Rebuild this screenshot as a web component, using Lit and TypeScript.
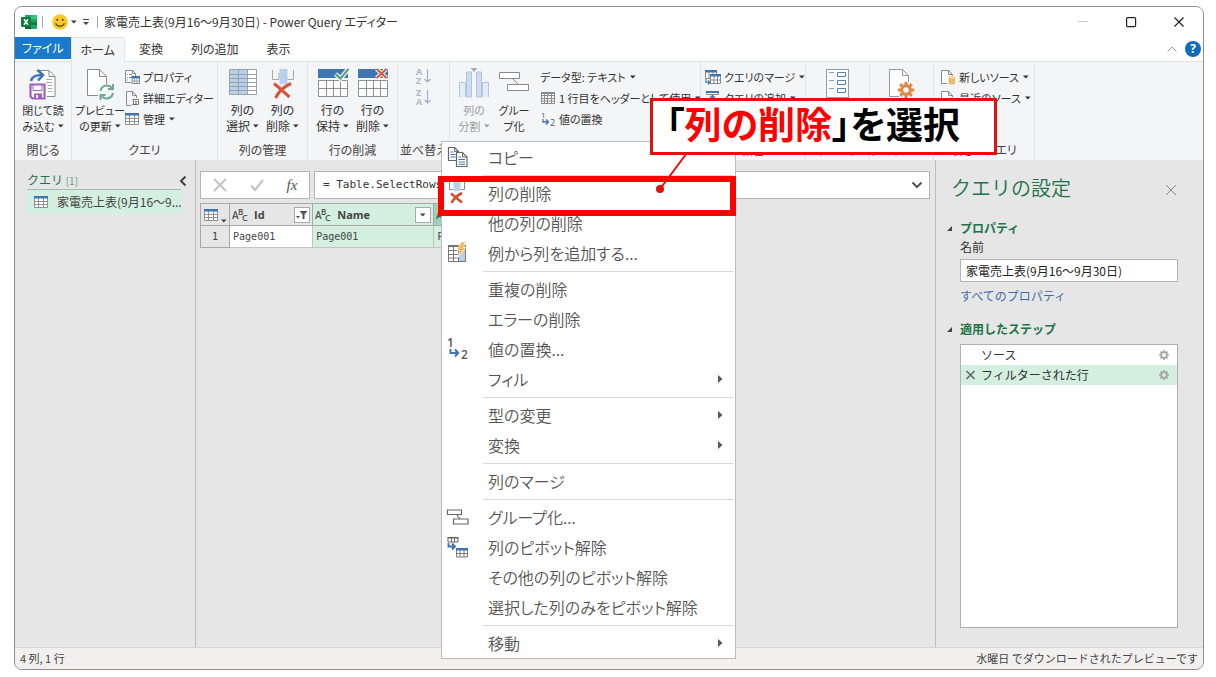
import { LitElement, html, svg, css, nothing } from "lit";
import { customElement } from "lit/decorators.js";
import { classMap } from "lit/directives/class-map.js";

const ic = (w: number, h: number, body: unknown) =>
  html`<svg class="ic" width=${w} height=${h} viewBox="0 0 ${w} ${h}" fill="none" aria-hidden="true">${body}</svg>`;

const caret = html`<svg class="caret" width="6" height="4" viewBox="0 0 6 4" aria-hidden="true"><path d="M0 .5h5.6L2.8 3.4z" fill="currentColor" /></svg>`;

const gearPath = (cx: number, cy: number, r: number, color: string, w: number) => svg`
  <circle cx=${cx} cy=${cy} r=${r} stroke=${color} stroke-width=${w} />
  ${[0, 45, 90, 135, 180, 225, 270, 315].map(
    (a) => svg`<path d="M${cx} ${cy - r - w * 0.3}v${-w * 0.9}" stroke=${color} stroke-width=${w * 0.95} transform="rotate(${a} ${cx} ${cy})" />`
  )}`;

const excel = ic(16, 16, svg`
  <path d="M4 1h11a1 1 0 0 1 1 1v12a1 1 0 0 1-1 1H4z" fill="#21a366" />
  <path d="M10 1h5a1 1 0 0 1 1 1v3h-6z" fill="#33c481" /><path d="M4 8h6v7H5a1 1 0 0 1-1-1z" fill="#185c37" />
  <path d="M10 8h6v3h-6z" fill="#107c41" />
  <rect y="3" width="10" height="10" rx="1" fill="#107c41" />
  <path d="M3 5.3l4 5.4M7 5.3l-4 5.4" stroke="#fff" stroke-width="1.5" />`);

const smiley = ic(16, 16, svg`
  <circle cx="8" cy="8" r="7.8" fill="#fbc926" />
  <circle cx="5.3" cy="5.8" r="1.1" fill="#5a4a2a" /><circle cx="10.7" cy="5.8" r="1.1" fill="#5a4a2a" />
  <path d="M3.6 9.2c1.6 4 7.2 4 8.8 0" stroke="#5a4a2a" stroke-width="1.2" />`);

const closeLoad = ic(28, 32, svg`
  <path d="M7.500 2.500h12.500l6 6v20h-8" fill="#fff" stroke="#8a8a8a" /><path d="M20 2.500v6h6" stroke="#8a8a8a" />
  <path d="M17 11.500h6M17 14.500h6M19 17.500h4M19 20.500h4M19 23.500h4" stroke="#a8a8a8" />
  <path d="M2 13c1-4.500 4-6 11-6" stroke="#3f74b5" stroke-width="2.600" /><path d="M8.500 2 14 7l-5 5.500" stroke="#3f74b5" stroke-width="2.600" />
  <path d="M1.500 16.500h14v14h-12l-2-2z" fill="#fff" stroke="#a05fc0" stroke-width="2.200" />
  <path d="M4 17h9v5.500H4z" fill="#fff" stroke="#a05fc0" /><path d="M5 25.500h8V31H5z" fill="#a05fc0" /><path d="M7 27h2v3H7z" fill="#fff" />`);

const refresh = ic(28, 32, svg`
  <path d="M1.500 1.500h12l7 7V20l-8 7.500h-11z" fill="#fff" />
  <path d="M12 27.500H1.500v-26h12l7 7v7.500M13.500 1.500v7h7" stroke="#8a8a8a" />
  <path d="M14.500 23a6.500 6.500 0 0 1 11.500-3M27 25a6.500 6.500 0 0 1-11.500 3" stroke="#6fa892" stroke-width="2" />
  <path d="M27 16v5h-5M14.500 32v-5h5" stroke="#6fa892" stroke-width="2" />`);

const props = ic(16, 16, svg`
  <path d="M7 13.500H1.500v-12h7l3 3V7" fill="#fff" stroke="#8a8a8a" /><path d="M8.500 1.500v3h3M3 5.500h1M5 5.500h3M3 8.500h1M5 8.500h2M3 11h1" stroke="#8a8a8a" />
  <rect x="8" y="7.500" width="7.500" height="7" fill="#fff" stroke="#8a8a8a" /><path d="M7.500 7h8.500v2.500H7.500z" fill="#3f74b5" /><path d="M10.500 9.500v5M13 9.500v5M8 12h7.500" stroke="#8a8a8a" stroke-width=".8" />`);

const adv = ic(16, 16, svg`
  <path d="M7 15.500H2.500v-14h6l4 4V8M8.500 1.500v4h4" stroke="#8a8a8a" />
  <path d="M8.500 9.500h6M9.500 9.500v5h5v-5M8 14.500h5M11 11.500h2M11 13h2" stroke="#777" />`);

const tableIcon = ic(16, 16, svg`
  <path d="M1.500 2.500h13v11h-13zM5.500 4v9.500M10.500 4v9.500M2 7.500h12.500M2 10.500h12.500" fill="#fff" stroke="#909090" /><path d="M1 2h14v2.500H1z" fill="#3f74b5" />`);

const chooseCols = ic(28, 28, svg`
  <rect x=".5" y="1.500" width="27" height="25" fill="#fff" /><path d="M.500 1.500h18v25H.500z" fill="#b9d0ea" />
  <path d="M.500 1.500h27v25H.500zM9.500 2v24M18.500 2v24M1 6.500h26M1 10.500h26M1 14.500h26M1 18.500h26M1 22.500h26" stroke="#98a2ad" />`);

const removeCols = ic(24, 32, svg`
  <path d="M1.500 2v9.500H8M22.500 2v9.500H16M8 11V5" stroke="#a6a6a6" /><path d="M8.500 1h8v15h-8z" fill="#b9d0ea" />
  <path d="M3 15.500c5 4 10 9 15.500 13.500M20 15.500C14 18 8 23 4.500 30" stroke="#d9553a" stroke-width="3" />`);

const rowGrid = svg`<path d="M.500 12.500h29v16H.500zM8.500 12.500v16M15.500 12.500v16M22.500 12.500v16M.500 20.500h29" fill="#fff" stroke="#8f8f8f" /><path d="M0 1h30v9H0z" fill="#3f77b4" />`;
const keepRows = ic(30, 30, svg`${rowGrid}<path d="M17.500 6l5 4.500 8-9.500" stroke="#fff" stroke-width="4.500" /><path d="M17.500 6l5 4.500 8-9.500" stroke="#5fa489" stroke-width="2.400" />`);
const removeRows = ic(30, 30, svg`${rowGrid}<path d="M18.500 1l10 9M28.500 1l-10 9" stroke="#fff" stroke-width="4" /><path d="M18.500 1l10 9M28.500 1l-10 9" stroke="#d9553a" stroke-width="2.200" />`);

const sortIcon = (a: string, b: string) => ic(16, 16, svg`
  <text x="0" y="7" font-size="9" font-weight="700" fill="#a9b6d3" font-family="Open Sans">${a}</text>
  <text x="0" y="15.500" font-size="9" font-weight="700" fill="#b5b9c2" font-family="Open Sans">${b}</text>
  <path d="M11.500 1v13M8.500 11l3 3 3-3" stroke="#9eaed0" stroke-width="1.200" />`);

const splitCols = ic(30, 30, svg`
  <path d="M.500 29V14.500h6V29M23.500 29V14.500h6V29" fill="#e3ecf9" stroke="#b8c7e0" /><path d="M7.500 4h5v25h-5zM17.500 4h5v25h-5z" fill="#cfdcf0" stroke="#b3c3de" /><path d="M11.500 0h7L15 4z" fill="#a8a8b0" />`);

const groupIcon = ic(30, 28, svg`<path d="M.500 4.500h20v6h-20zM8.500 16.500h21v6h-21z" fill="#fff" stroke="#8a8a8a" /><path d="M14 11l5 5" stroke="#8a8a8a" />`);

const headerIcon = ic(16, 16, svg`<path d="M1.500 2.500h13v11h-13zM4.500 3v10M7.500 3v10M11.500 3v10M2 5.500h12M2 8.500h12M2 11h12" fill="#fff" stroke="#8a8a8a" /><path d="M1 2h14v2H1z" fill="#8a8a8a" />`);

const replaceIcon = ic(16, 16, svg`
  <text x="1" y="7" font-size="8" fill="#555" font-family="Open Sans">1</text><text x="10" y="15" font-size="9" fill="#555" font-family="Open Sans">2</text>
  <path d="M3 8v3h5M6 8.500 8.500 11 6 13.500" stroke="#3f74b5" stroke-width="1.300" />`);

const mergeIcon = ic(16, 16, svg`
  <path d="M.500 1.500h11v8H.500zM4 2v7M8 2v7" fill="#fff" stroke="#8a8a8a" /><path d="M0 1h12v2.500H0z" fill="#3f74b5" />
  <path d="M5.500 5.500h10v9h-10zM9 7v7M12.500 7v7M6 11h9" fill="#fff" stroke="#8a8a8a" /><path d="M5 5h11v2.500H5z" fill="#3f74b5" />
  <path d="M1 10v3.500h4M3 11.500l2 2-2 2" stroke="#3f74b5" stroke-width="1.200" />`);

const appendIcon = ic(16, 16, svg`<path d="M1.500 1.500h12v3h-12z" fill="#fff" stroke="#8a8a8a" /><path d="M1 1h13v2H1z" fill="#3f74b5" /><path d="M7.500 5v7M5 8l2.500-2.500L10 8" stroke="#3f74b5" stroke-width="1.300" /><path d="M1.500 12.500h12" stroke="#8a8a8a" />`);

const paramIcon = ic(24, 30, svg`
  <rect x=".5" y="1.500" width="22" height="28" fill="#fff" stroke="#9a9a9a" /><path d="M3 4.500h5M3 12.500h5M3 20.500h5" stroke="#9a9a9a" />
  <path d="M11.500 4.500h8v4h-8zM11.500 12.500h8v4h-8zM11.500 20.500h8v4h-8z" stroke="#4a80bb" />`);

const sourceSet = ic(28, 30, svg`
  <path d="M11 28.500H1.500v-27h13l6 6V14M14.500 1.500v6h6" fill="#fff" stroke="#9a9a9a" />
  ${gearPath(18, 22, 4.4, "#e08842", 3.2)}`);

const newSrc = ic(16, 16, svg`<path d="M7 14.500H1.500v-13h7l4 4M8.500 1.500v4h4V7" fill="#fff" stroke="#8a8a8a" />
  <path d="M8.500 8v6c0 2 6.500 2 6.500 0V8z" fill="#e9bd6c" /><ellipse cx="11.750" cy="8" rx="3.250" ry="1.400" fill="#f5dba7" />`);
const recentSrc = ic(16, 16, svg`<path d="M7 14.500H1.500v-13h7l4 4M8.500 1.500v4h4V7" fill="#fff" stroke="#8a8a8a" /><circle cx="11.500" cy="11.500" r="3.500" stroke="#8a8a8a" /><path d="M11.500 9v3h2" stroke="#8a8a8a" />`);

const copyIcon = ic(22, 22, svg`
  <path d="M1.500 1.500h6l4 4v9h-10z" fill="#fff" stroke="#666" stroke-width="1.200" /><path d="M7.500 1.500v4h4M3.500 6h3M3.500 8.500h5M3.500 11h5" stroke="#3f74b5" />
  <path d="M9.500 6.500h6l4.500 4.500v9.500H9.500z" fill="#fff" stroke="#666" stroke-width="1.200" /><path d="M15.500 6.500V11H20" stroke="#666" /><path d="M11.500 11h2.500M11.500 13.500H18M11.500 16H18M11.500 18.300H18" stroke="#3f74b5" />`);
const removeSmall = ic(22, 24, svg`
  <path d="M2.500 1v7.500H6M17.500 1v7.500H14" stroke="#8a8a8a" /><path d="M6.500 0h7v10h-7z" fill="#b9d0ea" />
  <path d="M4 12.500l11 9M15 12c-4 2-8 5-10.500 10" stroke="#d0502f" stroke-width="2.600" />`);
const exampleIcon = ic(22, 22, svg`
  <path d="M1.500 3.500h17v16h-17z" fill="#fff" stroke="#777" /><path d="M12 4h6.500v15.500H12z" fill="#b9cfe6" /><path d="M1.500 3.500h17v16h-17zM6.500 4v15M11.500 4v15M2 8.500h10M2 12.500h10M2 16h10" stroke="#777" /><path d="M1 3h11v2H1z" fill="#777" />
  <path d="M14 0h4.500l-2 5.500H19L10.500 16l2-7.500H10z" fill="#f0bb66" stroke="#fff" stroke-width=".6" />`);
const replaceMenu = ic(22, 22, svg`
  <text x="0" y="9" font-size="12" font-weight="600" fill="#555" font-family="Open Sans">1</text><text x="14" y="21" font-size="12" font-weight="600" fill="#555" font-family="Open Sans">2</text>
  <path d="M3.500 11v4h7M8 11.500l3.200 3.500L8 18.500" stroke="#3f74b5" stroke-width="2" />`);
const groupMenu = ic(22, 22, svg`<path d="M.500 4h14v4.500h-14zM6.500 13H21v5H6.500z" fill="#fff" stroke="#666" stroke-width="1.200" /><path d="M10 9l3 4" stroke="#666" stroke-width="1.200" />`);
const unpivotIcon = ic(22, 22, svg`
  <path d="M1 1.500h10v4.500H1zM4.500 1.500V6M7.500 1.500V6" stroke="#666" /><path d="M.500 1h11v1.500H.500z" fill="#666" />
  <path d="M1.500 7v3.500H7M5 7.500l3 3-3 3" stroke="#3f74b5" stroke-width="1.900" />
  <path d="M9.500 12.500h11v8.500h-11zM13 14v7M17 14v7M10 17.500h10" fill="#fff" stroke="#777" /><path d="M9 12h12v2.500H9z" fill="#3f74b5" />`);

const gear = ic(14, 14, gearPath(7, 7, 2.9, "#a3a3a3", 1.7));
const typeText = ic(18, 16, svg`
  <g font-family="Open Sans" font-weight="600" fill="#555"><text x="0" y="12" font-size="10">A</text><text x="6" y="8" font-size="8">B</text><text x="10" y="14" font-size="9">C</text></g>`);

interface MenuItem { label: string; icon?: unknown; sub?: boolean; }
const menu: MenuItem[][] = [
  [{ label: "コピー", icon: copyIcon }],
  [{ label: "列の削除", icon: removeSmall }, { label: "他の列の削除" }, { label: "例から列を追加する...", icon: exampleIcon }],
  [{ label: "重複の削除" }, { label: "エラーの削除" }, { label: "値の置換...", icon: replaceMenu }, { label: "フィル", sub: true }],
  [{ label: "型の変更", sub: true }, { label: "変換", sub: true }],
  [{ label: "列のマージ" }],
  [{ label: "グループ化...", icon: groupMenu }, { label: "列のピボット解除", icon: unpivotIcon }, { label: "その他の列のピボット解除" }, { label: "選択した列のみをピボット解除" }],
  [{ label: "移動", sub: true }],
];

const big = (icon: unknown, l1: string, l2: string, drop = true, dim = false) => html`
  <button class=${classMap({ big: true, dim })}>
    <span class="pic">${icon}</span><span>${l1}</span><span class="l2">${l2}${drop ? caret : nothing}</span>
  </button>`;
const small = (icon: unknown, label: string, drop = false) => html`<button class="small">${icon}<span>${label}</span>${drop ? caret : nothing}</button>`;
const group = (cls: string, label: string, body: unknown) => html`
  <section class="group ${cls}"><div class="tools">${body}</div><div class="glabel">${label}</div></section>`;

@customElement("app-root")
export class AppRoot extends LitElement {
  static styles = css`
    :host { display: block; background: #fff; color: #333; font-family: "Noto Sans CJK JP", sans-serif; font-size: 12px; line-height: 16px; }
    * { box-sizing: border-box; }
    button { font: inherit; color: inherit; background: none; border: 0; padding: 0; margin: 0; font-feature-settings: inherit; }
    svg { display: block; flex: none; }
    .ic { overflow: visible; }
    .page { position: relative; min-height: 100vh; padding: 6px 12px 7px 14px; display: flex; }
    .window { flex: 1; min-width: 0; display: flex; flex-direction: column; border: 1px solid #8b8f92; border-radius: 8px; overflow: hidden; background: #e6e6e6; }

    .title { display: flex; align-items: center; height: 30px; background: #fff; padding-left: 6px; font-feature-settings: "palt"; }
    .title h1 { font-size: 12px; line-height: 16px; font-weight: 400; margin: 0 auto 0 0; }
    .bar { width: 1px; height: 12px; background: #aaa; margin: 0 6px 0 5px; }
    .quick { display: flex; align-items: center; gap: 3px; margin-left: 3px; }
    .quick .more { margin: 0 3px; }
    .ctl { width: 48px; height: 28px; display: grid; place-items: center; }

    .tabs { display: flex; align-items: stretch; height: 25px; background: #fff; border-bottom: 1px solid #dfe1e4; font-feature-settings: "palt"; }
    .tab { padding: 0 14px; }
    .file { background: #1979ca; color: #fff; padding: 0 7px; height: 22px; }
    .on { background: #f4f5f7; border: 1px solid #e2e4e7; border-width: 1px 1px 0; padding: 0 9px; height: 25px; }
    .tabend { margin-left: auto; display: flex; align-items: center; gap: 8px; padding-right: 2px; }
    .help { width: 16px; height: 16px; border-radius: 50%; background: #0f6cbd; color: #fff; font: 700 12px/16px "Open Sans", sans-serif; }

    .ribbon { display: flex; height: 98px; background: #f4f5f7; font-feature-settings: "palt"; overflow: hidden; }
    .group { flex: none; display: flex; flex-direction: column; border-right: 1px solid #e2e4e7; white-space: nowrap; }
    .tools { flex: 1; display: flex; justify-content: center; padding-top: 4px; }
    .glabel { text-align: center; height: 18px; color: #444; }
    .g1 { width: 57px; } .g2 { width: 146px; } .g3, .g4 { width: 90px; } .g5 { width: 52px; } .g6 { width: 251px; }
    .g7 { width: 105px; } .g8, .g9 { width: 64px; } .g10 { width: 101px; }
    .big { flex: none; width: 40px; display: flex; flex-direction: column; align-items: center; }
    .g1 .big, .g2 .big { width: 48px; font-size: 11px; }
    .g6 .big { font-size: 11px; }
    .pic { height: 33px; margin: 2px 0 1px; }
    .l2 { display: flex; align-items: center; gap: 3px; }
    .dim { color: #9a9a9a; }
    .stack { display: flex; flex-direction: column; align-items: flex-start; }
    .small { display: flex; align-items: center; gap: 3px; height: 21px; font-size: 11px; }
    .small .caret { margin-left: 1px; }
    .g2 .tools, .g6 .tools, .g7 .tools, .g10 .tools { justify-content: flex-start; padding-left: 4px; }
    .g10 .tools { padding-left: 6px; }
    .g6 .stack { padding-left: 6px; }
    .sorts { display: flex; flex-direction: column; gap: 5px; padding-top: 2px; }

    .body { flex: 1; display: flex; min-height: 0; }
    .queries { flex: none; width: 181px; border-right: 1px solid #bdbdbd; padding: 12px 14px 0 12px; }
    .qhead { display: flex; align-items: center; justify-content: space-between; height: 18px; border-bottom: 1px solid #a9b5ae; color: #217346; }
    .qhead small { font-size: 10px; color: #6f9b82; }
    .qitem { width: 100%; display: flex; align-items: center; gap: 8px; height: 24px; background: #d2efdf; padding-left: 6px; color: #444; text-align: left; white-space: nowrap; }
    .fold { margin-right: -6px; }
    .center { flex: 1; min-width: 0; padding: 11px 5px 0 4px; display: flex; flex-direction: column; gap: 4px; }
    .formula { display: flex; gap: 4px; height: 28px; }
    .fbtns { width: 110px; display: flex; align-items: center; justify-content: space-around; background: #fff; border: 1px solid #b5b5b5; }
    .fx { font: italic 15px/16px "Liberation Serif", serif; color: #555; }
    .fbox { flex: 1; min-width: 0; display: flex; align-items: center; background: #fff; border: 1px solid #b5b5b5; padding: 0 6px 0 8px; }
    .fbox input { flex: 1; min-width: 0; border: 0; outline: 0; background: none; padding: 0; color: #333; font: 11px/16px "DejaVu Sans Mono", monospace; }
    .grid { border-collapse: collapse; table-layout: fixed; width: 477px; font: 10px/14px "DejaVu Sans Mono", monospace; color: #444; }
    .grid th, .grid td { border: 1px solid #c3c3c3; height: 22px; padding: 0 3px; text-align: left; }
    .grid th { background: #e6e6e6; border-color: #a8a8a8; padding: 0 2px; font: 700 11px/16px "Open Sans", sans-serif; }
    .grid td { background: #fff; }
    .grid .num { background: #e6e6e6; text-align: center; border-color: #a8a8a8; }
    .grid .sel { background: #d2efdf; }
    .grid .cur { background: #9fd3b8; }
    .c0 { width: 29px; } .c1 { width: 83px; } .c2 { width: 121px; }
    .hd { display: flex; align-items: center; gap: 4px; }
    .hd .caret { align-self: flex-end; margin-left: -2px; }
    .filter { margin-left: auto; width: 16px; height: 16px; background: #fff; border: 1px solid #aaa; display: grid; place-items: center; }
    .hd .filter .caret { align-self: center; margin: 0; }

    .settings { flex: none; width: 268px; border-left: 1px solid #bdbdbd; padding: 14px 25px 19px 24px; display: flex; flex-direction: column; }
    .shead { display: flex; align-items: center; justify-content: space-between; margin-left: -9px; }
    .shead h2 { margin: 0; font-size: 20px; line-height: 28px; font-weight: 350; color: #217346; }
    .settings h3 { display: flex; align-items: center; gap: 7px; margin: 0 0 0 -14px; font-size: 12px; line-height: 20px; font-weight: 700; color: #217346; }
    .settings h3.p1 { margin-top: 16px; }
    .settings label { display: block; line-height: 18px; }
    .name { display: block; width: 100%; height: 23px; margin-top: 3px; border: 1px solid #b5b5b5; background: #fff; padding: 0 5px; font: 12px/16px "Noto Sans CJK JP", sans-serif; color: #222; }
    .all { color: #3f6fa8; text-decoration: none; margin: 6px 0 15px; align-self: flex-start; }
    .steps { list-style: none; flex: 1; margin: 5px 0 0; padding: 0; background: #fff; border: 1px solid #b0b0b0; }
    .step { display: grid; grid-template-columns: 16px 1fr 14px; align-items: center; height: 20px; padding: 0 6px 0 4px; }
    .now { background: #d2efdf; }
    .status { display: flex; justify-content: space-between; height: 22px; border-top: 1px solid #d6d6d6; background: #f1f0ef; align-items: center; padding: 0 5px 1px; font-size: 11px; color: #444; }

    .menu { position: absolute; left: 441px; top: 141px; width: 295px; background: #fff; border: 1px solid #bcbcbc; font-size: 16px; font-weight: 350; color: #555; font-feature-settings: "palt"; }
    .item { display: grid; grid-template-columns: 41px 1fr 18px; align-items: center; width: 100%; height: 30px; padding-left: 5px; text-align: left; line-height: 24px; }
    .sep { height: 6px; margin: 0 1px 0 41px; padding-top: 3px; }
    .rule { height: 1px; background: #d5d9da; }
    .mark { position: absolute; left: 438px; top: 176px; width: 298px; height: 40px; border: 6px solid #fe0000; }
    .leader { position: absolute; left: 650px; top: 150px; }
    .callout { position: absolute; left: 650px; top: 98px; width: 347px; height: 57px; border: 3px solid #e60f0f; background: #fff; padding-left: 13px; font-size: 37px; line-height: 45px; font-weight: 700; color: #000; white-space: nowrap; font-feature-settings: "palt"; margin: 0; }
    .callout em { font-style: normal; color: #fe0000; }
  `;

  render() {
    return html`<div class="page">
      <main class="window">
        <header class="title">
          ${excel}<span class="bar"></span>
          <div class="quick">${smiley}${caret}<svg class="more" width="6" height="8" viewBox="0 0 6 8"><path d="M0 1.500h6" stroke="#444" /><path d="M0 4h6L3 7z" fill="#444" /></svg></div>
          <span class="bar"></span>
          <h1>家電売上表(9月16～9月30日) - Power Query エディター</h1>
          <button class="ctl" aria-label="最小化">${ic(10, 10, svg`<path d="M0 4.500h10" stroke="#ccc" />`)}</button>
          <button class="ctl" aria-label="最大化">${ic(10, 10, svg`<rect x=".6" y=".6" width="9" height="9" rx="1" stroke="#222" stroke-width="1.200" />`)}</button>
          <button class="ctl" aria-label="閉じる">${ic(10, 10, svg`<path d="M.500.500l9 9M9.500.500l-9 9" stroke="#222" stroke-width="1.200" />`)}</button>
        </header>
        <nav class="tabs">
          <button class="file">ファイル</button><button class="tab on">ホーム</button><button class="tab">変換</button><button class="tab">列の追加</button><button class="tab">表示</button>
          <div class="tabend">${ic(10, 6, svg`<path d="M.500 5.500 5 1l4.500 4.500" stroke="#999" />`)}<button class="help">?</button></div>
        </nav>
        <div class="ribbon">
          ${group("g1", "閉じる", big(closeLoad, "閉じて読", "み込む"))}
          ${group("g2", "クエリ", html`${big(refresh, "プレビュー", "の更新")}<div class="stack">${small(props, "プロパティ")}${small(adv, "詳細エディター")}${small(tableIcon, "管理", true)}</div>`)}
          ${group("g3", "列の管理", html`${big(chooseCols, "列の", "選択")}${big(removeCols, "列の", "削除")}`)}
          ${group("g4", "行の削減", html`${big(keepRows, "行の", "保持")}${big(removeRows, "行の", "削除")}`)}
          ${group("g5", "並べ替え", html`<div class="sorts"><button aria-label="昇順">${sortIcon("A", "Z")}</button><button aria-label="降順">${sortIcon("Z", "A")}</button></div>`)}
          ${group("g6", "", html`${big(splitCols, "列の", "分割", true, true)}${big(groupIcon, "グルー", "プ化", false)}<div class="stack">${small(nothing, "データ型: テキスト", true)}${small(headerIcon, "1 行目をヘッダーとして使用", true)}${small(replaceIcon, "値の置換")}</div>`)}
          ${group("g7", "結合", html`<div class="stack">${small(mergeIcon, "クエリのマージ", true)}${small(appendIcon, "クエリの追加", true)}</div>`)}
          ${group("g8", "パラメーター", html`<button class="big" aria-label="パラメーターの管理"><span class="pic">${paramIcon}</span></button>`)}
          ${group("g9", "データ ソース", html`<button class="big" aria-label="データ ソース設定"><span class="pic">${sourceSet}</span></button>`)}
          ${group("g10", "新しいクエリ", html`<div class="stack">${small(newSrc, "新しいソース", true)}${small(recentSrc, "最近のソース", true)}</div>`)}
        </div>
        <div class="body">
          <aside class="queries">
            <div class="qhead"><span>クエリ <small>[1]</small></span><button class="fold" aria-label="折りたたむ">${ic(8, 12, svg`<path d="M6.500 1.500 2 6l4.500 4.500" stroke="#444" stroke-width="2" />`)}</button></div>
            <button class="qitem">${tableIcon}<span>家電売上表(9月16～9...</span></button>
          </aside>
          <section class="center">
            <div class="formula">
              <div class="fbtns">
                <button aria-label="キャンセル">${ic(14, 14, svg`<path d="M1 1l12 12M13 1 1 13" stroke="#c4c4c4" stroke-width="2" />`)}</button>
                <button aria-label="確定">${ic(14, 14, svg`<path d="M1 7.500l4 4.500 8-10" stroke="#c4c4c4" stroke-width="2.200" />`)}</button>
                <button class="fx">fx</button>
              </div>
              <div class="fbox"><input aria-label="数式" .value=${"= Table.SelectRows"} /><button aria-label="展開">${ic(12, 8, svg`<path d="M1.500 1.500 6 6l4.500-4.500" stroke="#555" stroke-width="2" />`)}</button></div>
            </div>
            <table class="grid">
              <colgroup><col class="c0" /><col class="c1" /><col class="c2" /><col class="c2" /><col class="c2" /></colgroup>
              <tr>
                <th><div class="hd">${tableIcon}${caret}</div></th>
                <th><div class="hd">${typeText}<span>Id</span><button class="filter" aria-label="フィルター">${ic(12, 10, svg`<path d="M3.500 1h8L8.500 4.500V9h-2V4.500z" fill="#555" /><path d="M0 6h4L2 8.500z" fill="#555" />`)}</button></div></th>
                <th class="sel"><div class="hd">${typeText}<span>Name</span><button class="filter" aria-label="フィルター">${caret}</button></div></th>
                <th class="cur"><div class="hd">${typeText}</div></th>
                <th></th>
              </tr>
              <tr><td class="num">1</td><td>Page001</td><td class="sel">Page001</td><td class="sel">Page001</td><td></td></tr>
            </table>
          </section>
          <aside class="settings">
            <div class="shead"><h2>クエリの設定</h2><button aria-label="閉じる">${ic(14, 14, svg`<path d="M2 4l10 10M12 4 2 14" stroke="#8a8a8a" />`)}</button></div>
            <h3 class="p1">${ic(7, 7, svg`<path d="M6 1v5H1z" fill="#444" />`)}プロパティ</h3>
            <label for="qn">名前</label>
            <input id="qn" class="name" .value=${"家電売上表(9月16～9月30日)"} />
            <a class="all" href="#">すべてのプロパティ</a>
            <h3>${ic(7, 7, svg`<path d="M6 1v5H1z" fill="#444" />`)}適用したステップ</h3>
            <ul class="steps">
              <li class="step"><span></span><span>ソース</span>${gear}</li>
              <li class="step now">${ic(12, 10, svg`<path d="M1.500 1l8 8M9.500 1l-8 8" stroke="#666" stroke-width="1.600" />`)}<span>フィルターされた行</span>${gear}</li>
            </ul>
          </aside>
        </div>
        <footer class="status"><span>4 列, 1 行</span><span>水曜日 でダウンロードされたプレビューです</span></footer>
      </main>
      <div class="menu" role="menu">
        ${menu.map((g, i) => html`${i ? html`<div class="sep"><div class="rule"></div></div>` : nothing}${g.map(
          (m) => html`<button class="item" role="menuitem"><span>${m.icon ?? nothing}</span><span>${m.label}</span>${m.sub ? ic(6, 10, svg`<path d="M1 1v8l4.500-4z" fill="#555" />`) : nothing}</button>`
        )}`)}
      </div>
      <div class="mark"></div>
      <svg class="leader" width="50" height="50" viewBox="0 0 50 50" aria-hidden="true"><path d="M37 3 10 39" stroke="#e60f0f" stroke-width="2" /><circle cx="10" cy="39" r="4" fill="#e60f0f" /></svg>
      <p class="callout">「<em>列の削除</em>」を選択</p>
    </div>`;
  }
}
